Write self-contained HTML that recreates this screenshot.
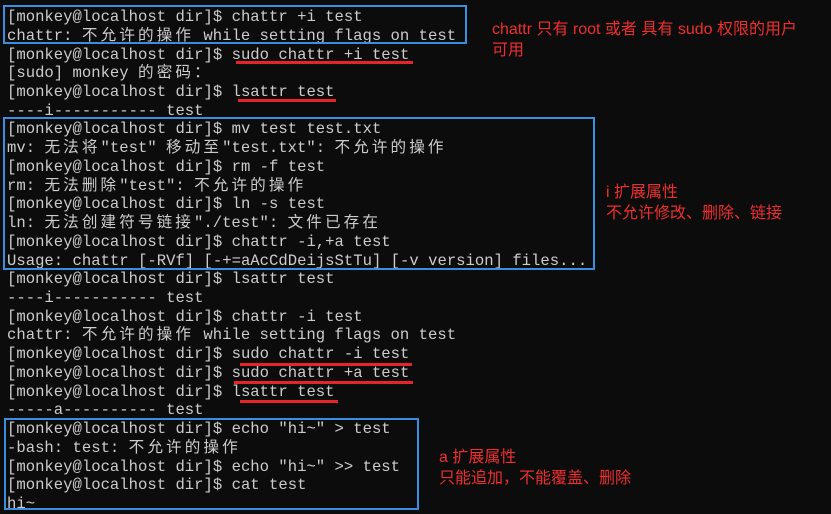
<!DOCTYPE html>
<html><head><meta charset="utf-8"><style>
html,body{margin:0;padding:0;background:#0c0c0c;width:831px;height:514px;overflow:hidden;position:relative}
.l{position:absolute;left:7px;height:19px;line-height:19px;font-family:"Liberation Mono","Noto Sans CJK SC",monospace;font-size:15.6px;color:#cccccc;white-space:pre}
.c{letter-spacing:3.1px}
.box{position:absolute;border:2px solid #3a8ee0;box-sizing:border-box}
.u{position:absolute;height:3px;background:#e8232a}
.a{position:absolute;font-family:"Liberation Sans","Noto Sans CJK SC",sans-serif;font-size:16px;color:#ee2e2e;line-height:21px;white-space:pre}
</style></head><body>
<div style="position:absolute;left:0;top:2px;width:831px;height:514px">
<div class="l" style="top:6px">[monkey@localhost dir]$ chattr +i test</div>
<div class="l" style="top:24.7px">chattr: <span class="c">不允许的操作</span> while setting flags on test</div>
<div class="l" style="top:43.5px">[monkey@localhost dir]$ sudo chattr +i test</div>
<div class="l" style="top:62.2px">[sudo] monkey <span class="c">的密码：</span></div>
<div class="l" style="top:80.9px">[monkey@localhost dir]$ lsattr test</div>
<div class="l" style="top:99.7px">----i----------- test</div>
<div class="l" style="top:118.4px">[monkey@localhost dir]$ mv test test.txt</div>
<div class="l" style="top:137.1px">mv: <span class="c">无法将</span>"test" <span class="c">移动至</span>"test.txt": <span class="c">不允许的操作</span></div>
<div class="l" style="top:155.8px">[monkey@localhost dir]$ rm -f test</div>
<div class="l" style="top:174.6px">rm: <span class="c">无法删除</span>"test": <span class="c">不允许的操作</span></div>
<div class="l" style="top:193.3px">[monkey@localhost dir]$ ln -s test</div>
<div class="l" style="top:212px">ln: <span class="c">无法创建符号链接</span>"./test": <span class="c">文件已存在</span></div>
<div class="l" style="top:230.8px">[monkey@localhost dir]$ chattr -i,+a test</div>
<div class="l" style="top:249.5px">Usage: chattr [-RVf] [-+=aAcCdDeijsStTu] [-v version] files...</div>
<div class="l" style="top:268.2px">[monkey@localhost dir]$ lsattr test</div>
<div class="l" style="top:286.9px">----i----------- test</div>
<div class="l" style="top:305.7px">[monkey@localhost dir]$ chattr -i test</div>
<div class="l" style="top:324.4px">chattr: <span class="c">不允许的操作</span> while setting flags on test</div>
<div class="l" style="top:343.1px">[monkey@localhost dir]$ sudo chattr -i test</div>
<div class="l" style="top:361.9px">[monkey@localhost dir]$ sudo chattr +a test</div>
<div class="l" style="top:380.6px">[monkey@localhost dir]$ lsattr test</div>
<div class="l" style="top:399.3px">-----a---------- test</div>
<div class="l" style="top:418px">[monkey@localhost dir]$ echo "hi~" &gt; test</div>
<div class="l" style="top:436.8px">-bash: test: <span class="c">不允许的操作</span></div>
<div class="l" style="top:455.5px">[monkey@localhost dir]$ echo "hi~" &gt;&gt; test</div>
<div class="l" style="top:474.2px">[monkey@localhost dir]$ cat test</div>
<div class="l" style="top:493px">hi~</div>
</div>

<div class="box" style="left:3px;top:5px;width:464px;height:39px"></div>
<div class="box" style="left:3px;top:117px;width:592px;height:153px"></div>
<div class="box" style="left:4px;top:418px;width:415px;height:92px"></div>

<div class="u" style="left:236px;top:61px;width:177px"></div>
<div class="u" style="left:238px;top:99px;width:98px"></div>
<div class="u" style="left:240px;top:363px;width:172px"></div>
<div class="u" style="left:234px;top:381px;width:179px"></div>
<div class="u" style="left:240px;top:400px;width:98px"></div>

<div class="a" style="left:492px;top:19px">chattr 只有 root 或者 具有 sudo 权限的用户</div>
<div class="a" style="left:492px;top:40px">可用</div>
<div class="a" style="left:606px;top:182px">i 扩展属性</div>
<div class="a" style="left:606px;top:203px">不允许修改、删除、链接</div>
<div class="a" style="left:439px;top:447px">a 扩展属性</div>
<div class="a" style="left:439px;top:468px">只能追加，不能覆盖、删除</div>
</body></html>
